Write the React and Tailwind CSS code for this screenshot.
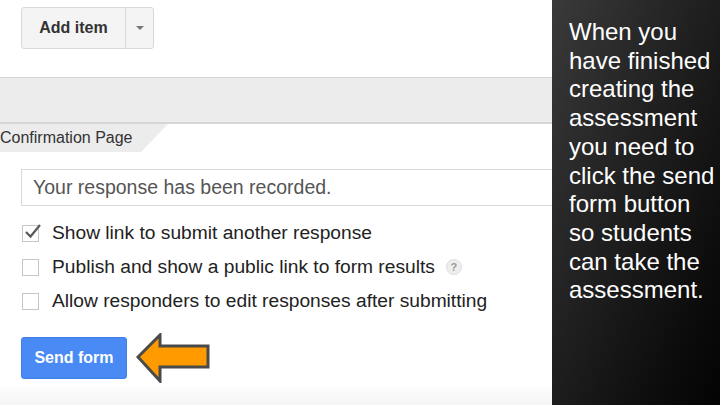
import React from "react";

const OPTIONS = [
  { label: "Show link to submit another response", checked: true },
  { label: "Publish and show a public link to form results", help: true },
  { label: "Allow responders to edit responses after submitting" },
];

const NOTE = [
  "When you",
  "have finished",
  "creating the",
  "assessment",
  "you need to",
  "click the send",
  "form button",
  "so students",
  "can take the",
  "assessment.",
];

function Checkbox({ checked }) {
  return (
    <div className="relative w-[17px] h-[17px] border border-[#c6c6c6] bg-white shrink-0">
      {checked && (
        <svg className="absolute left-[1px] top-[-4px]" width="18" height="18" viewBox="0 0 18 18">
          <path d="M2 10 L6.5 14.5 L16 3" fill="none" stroke="#5a5a5a" strokeWidth="2.2" />
        </svg>
      )}
    </div>
  );
}

function Arrow() {
  return (
    <svg width="75" height="50" viewBox="0 0 75 50" className="ml-[9px]">
      <path
        d="M2 24 L24 2 L24 13 L72 13 L72 34 L24 34 L24 48 Z"
        fill="#ff9a00"
        stroke="#4a4a4a"
        strokeWidth="3"
        strokeLinejoin="miter"
      />
    </svg>
  );
}

export default function App() {
  return (
    <div className="w-[720px] h-[405px] flex overflow-hidden font-['Liberation_Sans',Arial,sans-serif]">
      {/* form editor */}
      <div className="w-[552px] flex flex-col bg-white">
        <div className="h-[77px] pt-[7px] pl-[21px]">
          <div className="flex h-[42px] w-[133px] rounded-[3px] border border-[#d9d9d9] bg-[#f4f4f4]">
            <div className="w-[104px] flex items-center justify-center text-[16px] font-bold text-[#333] border-r border-[#d9d9d9]">
              Add item
            </div>
            <div className="flex-1 flex items-center justify-center">
              <div className="w-0 h-0 border-l-[4px] border-r-[4px] border-t-[4px] border-l-transparent border-r-transparent border-t-[#777]" />
            </div>
          </div>
        </div>

        <div className="h-[47px] bg-[#ececec] border-t border-[#d4d4d4] border-b-2 border-b-[#d6d6d6]" />

        <div className="h-[28px] w-[168px] bg-[#ececec] [clip-path:polygon(0_0,100%_0,84%_100%,0_100%)] text-[16px] leading-[28px] text-[#333]">
          Confirmation Page
        </div>

        <div className="mt-[17px] ml-[21px] h-[37px] border border-r-0 border-[#d9d9d9] pl-[11px] pt-[1px] flex items-center text-[19.5px] text-[#555]">
          Your response has been recorded.
        </div>

        <div className="mt-[10px] pl-[22px] flex flex-col">
          {OPTIONS.map((o) => (
            <div key={o.label} className="h-[34px] flex items-center">
              <Checkbox checked={o.checked} />
              <span className="ml-[13px] text-[19.2px] text-[#222] whitespace-nowrap">{o.label}</span>
              {o.help && (
                <span className="ml-[11px] w-[16px] h-[16px] rounded-full bg-[#eeeeee] border border-[#dddddd] flex items-center justify-center text-[11px] font-bold text-[#9a9a9a]">
                  ?
                </span>
              )}
            </div>
          ))}
        </div>

        <div className="mt-[15px] pl-[21px] flex items-center">
          <div className="h-[42px] w-[106px] rounded-[3px] bg-[#4a8af4] border border-[#3f7fe8] flex items-center justify-center text-[16px] font-bold text-white">
            Send form
          </div>
          <Arrow />
        </div>

        <div className="flex-1 bg-linear-to-b from-white to-[#f5f5f5]" />
      </div>

      {/* note panel */}
      <div className="flex-1 bg-linear-to-br from-[#3a3a3a] via-[#1d1d1d] to-[#040404] pt-[18px] pl-[17px] text-white text-[24px] leading-[28.7px]">
        {NOTE.map((line) => (
          <div key={line} className="whitespace-nowrap">{line}</div>
        ))}
      </div>
    </div>
  );
}
